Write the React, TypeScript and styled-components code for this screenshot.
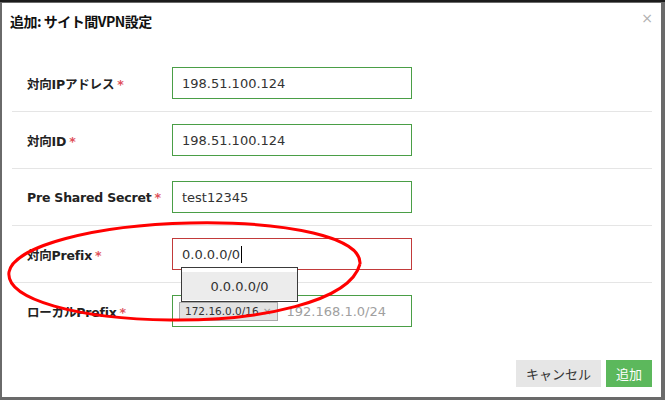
import React from "react";
import styled, { createGlobalStyle } from "styled-components";

const GlobalStyle = createGlobalStyle`
  html, body {
    margin: 0;
    padding: 0;
    width: 665px;
    height: 400px;
    overflow: hidden;
    background: #6a6a6a;
  }
  * { box-sizing: border-box; }
`;

const JP = `"DejaVu Sans", "Noto Sans CJK JP", sans-serif`;

const Page = styled.div`
  position: relative;
  width: 665px;
  height: 400px;
  border-top: 2px solid #1c1c1c;
  padding: 1px 4px 3px 2px;
  background: #6a6a6a;
`;

const Modal = styled.div`
  background: #fff;
  height: 100%;
  display: flex;
  flex-direction: column;
  font-family: ${JP};
  color: #333;
`;

const Header = styled.div`
  display: flex;
  justify-content: space-between;
  align-items: flex-start;
  height: 52px;
  padding: 8px 8px 0 8px;
`;

const Title = styled.h4`
  margin: 0;
  font-size: 14px;
  font-weight: bold;
  color: #111;
  font-family: "Noto Sans CJK JP", "DejaVu Sans", sans-serif;
  letter-spacing: -0.5px;
`;

const Close = styled.span`
  font-size: 14px;
  color: #b0b0b0;
  line-height: 1;
  margin-top: 0px;
`;

const Body = styled.div`
  padding: 0 9px 0 10px;
`;

const Row = styled.div<{ $last?: boolean }>`
  display: grid;
  grid-template-columns: 160px 240px;
  align-items: center;
  padding: 12px 0 12px;
  border-bottom: ${(p) => (p.$last ? "none" : "1px solid #e5e5e5")};
`;

const Label = styled.label`
  padding-left: 15px;
  font-size: 12.5px;
  font-weight: bold;
  color: #222;
  font-family: "DejaVu Sans", "Noto Sans CJK JP", sans-serif;
  letter-spacing: -0.2px;
`;

const Req = styled.span`
  color: #e0505a;
  margin-left: 3px;
  font-weight: bold;
`;

const Field = styled.div<{ $error?: boolean }>`
  position: relative;
  height: 32px;
  border: 1px solid ${(p) => (p.$error ? "#c23a3a" : "#4a9e46")};
  display: flex;
  align-items: center;
  padding-left: 9px;
  font-size: 13px;
  color: #333;
`;

const Caret = styled.span`
  display: inline-block;
  width: 1px;
  height: 17px;
  background: #000;
  margin-left: 1px;
`;

const Suggest = styled.div`
  position: absolute;
  left: 8px;
  top: 28px;
  width: 117px;
  height: 35px;
  border: 1px solid #3a3a3a;
  background: #fff;
  padding-top: 4px;
  z-index: 2;
`;

const SuggestItem = styled.div`
  height: 28px;
  background: #ececec;
  display: flex;
  align-items: center;
  justify-content: center;
  font-size: 13px;
  color: #333;
`;

const Tag = styled.span`
  display: inline-flex;
  align-items: center;
  height: 19px;
  padding: 0 5px 0 5px;
  margin-left: -3px;
  background: #e2e2e2;
  border: 1px solid #aaa;
  font-size: 10.5px;
  color: #333;
  white-space: nowrap;
`;

const TagX = styled.span`
  color: #999;
  margin-left: 4px;
`;

const Placeholder = styled.span`
  color: #a0a0a0;
  font-size: 13px;
  margin-left: 9px;
`;

const Footer = styled.div`
  margin-top: auto;
  display: flex;
  justify-content: flex-end;
  gap: 5px;
  padding: 0 9px 10px 0;
`;

const Button = styled.button<{ $primary?: boolean }>`
  height: 27px;
  border: none;
  padding: 0 10px;
  font-family: "Noto Sans CJK JP", sans-serif;
  font-size: 13px;
  background: ${(p) => (p.$primary ? "#5cb85c" : "#e6e6e6")};
  color: ${(p) => (p.$primary ? "#fff" : "#333")};
`;

const Annotation = styled.svg`
  position: absolute;
  left: 0;
  top: 0;
  pointer-events: none;
  z-index: 5;
`;

export default function App() {
  return (
    <>
      <GlobalStyle />
      <Page>
        <Modal>
          <Header>
            <Title>追加: サイト間VPN設定</Title>
            <Close>×</Close>
          </Header>
          <Body>
            <Row>
              <Label>
                対向IPアドレス<Req>*</Req>
              </Label>
              <Field>198.51.100.124</Field>
            </Row>
            <Row>
              <Label>
                対向ID<Req>*</Req>
              </Label>
              <Field>198.51.100.124</Field>
            </Row>
            <Row>
              <Label>
                Pre Shared Secret<Req>*</Req>
              </Label>
              <Field>test12345</Field>
            </Row>
            <Row>
              <Label>
                対向Prefix<Req>*</Req>
              </Label>
              <Field $error>
                0.0.0.0/0
                <Caret />
                <Suggest>
                  <SuggestItem>0.0.0.0/0</SuggestItem>
                </Suggest>
              </Field>
            </Row>
            <Row $last>
              <Label>
                ローカルPrefix<Req>*</Req>
              </Label>
              <Field>
                <Tag>
                  172.16.0.0/16<TagX>×</TagX>
                </Tag>
                <Placeholder>192.168.1.0/24</Placeholder>
              </Field>
            </Row>
          </Body>
          <Footer>
            <Button>キャンセル</Button>
            <Button $primary>追加</Button>
          </Footer>
        </Modal>
        <Annotation width="665" height="400" viewBox="0 0 665 400">
          <path
            d="M 360 262 C 362 236, 290 219, 190 221 C 95 223, 14 244, 9 270 C 5 298, 80 317, 170 318 C 260 319, 350 300, 360 262"
            fill="none"
            stroke="#ff0000"
            strokeWidth="3"
          />
        </Annotation>
      </Page>
    </>
  );
}
